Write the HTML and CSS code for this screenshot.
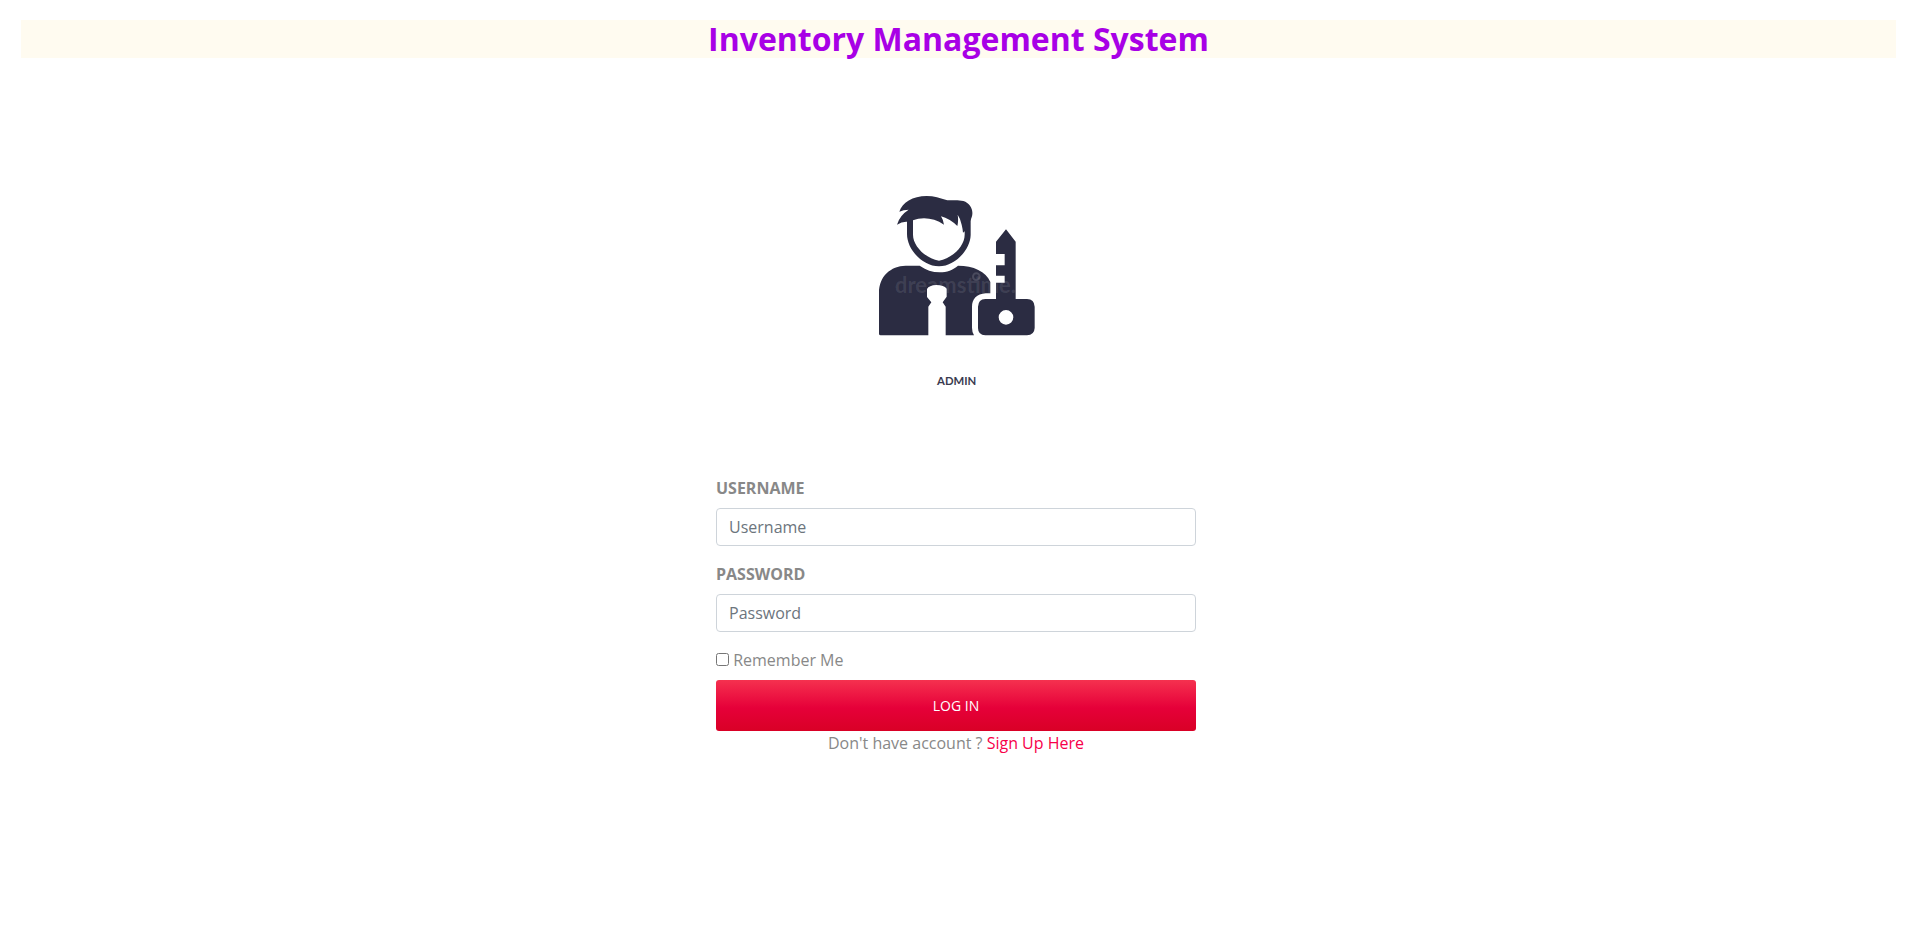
FILE: index.html
```html
<!DOCTYPE html>
<html lang="en">
<head>
<meta charset="utf-8">
<title>Inventory Management System</title>
<link rel="stylesheet" href="styles.css">
</head>
<body>
<header class="page-header">
  <h1 class="page-title">Inventory Management System</h1>
</header>
<main class="login">
  <svg class="login-picture" viewBox="3 0 570 660" role="img" aria-label="Admin">
    <g fill="#2b2c42">
      <path d="M118 95 C126 68 158 48 200 48 C222 48 240 54 262 61 C277 61 295 59 310 63 C332 70 342 92 335 112 Q332 118 332 124 V165 C331 209 285 259 237 259 C188 259 141 209 141 162 V125 Q126 124 111 134 Q119 106 146 89 Q130 89 118 95 Z"/>
      <path d="M57 461 V338 C57 289 92 258 137 257 H179 C197 270 217 277 239 277 C261 277 279 270 294 257 C340 257 378 274 391 306 V340 H377 C350 342 336 357 336 381 V443 Q336 456 342 466 H257 V380 L248 367 L260 350 V326 Q252 315 229 315 Q207 316 201 327 V351 L214 367 L205 380 V466 H62 Q57 466 57 461 Z"/>
      <path fill-rule="evenodd" d="M438 148 L467 185 V357 H501 Q523 358 524 380 V444 Q523 465 501 466 H376 Q354 465 354 444 V380 Q355 358 376 357 H408 V308 H434 V287 H408 V256 H434 V222 H408 V185 Z M438 390 A22 22 0 1 0 438 434 A22 22 0 1 0 438 390 Z"/>
    </g>
    <path fill="#fff" d="M159 121 C186 110 222 113 252 134 Q250 120 243 109 Q269 116 292 138 Q296 122 293 104 Q302 117 305 134 Q308 146 309 158 L314 154 V164 C314 198 277 235 237 242 C197 236 159 198 159 164 Z"/>
    <text class="watermark" x="105" y="339">dreamstime.</text>
    <circle class="watermark-mark" cx="349" cy="290" r="10"/>
    <text class="picture-caption" x="290" y="614">ADMIN</text>
  </svg>
  <form class="login-form">
    <div class="field">
      <label class="field-label" for="username">USERNAME</label>
      <input class="field-input" id="username" type="text" placeholder="Username">
    </div>
    <div class="field">
      <label class="field-label" for="password">PASSWORD</label>
      <input class="field-input" id="password" type="password" placeholder="Password">
    </div>
    <div class="remember">
      <input class="remember-box" id="remember" type="checkbox">
      <label for="remember">Remember Me</label>
    </div>
    <button class="login-button" type="submit">LOG IN</button>
    <p class="signup">Don't have account ? <a class="signup-link" href="#">Sign Up Here</a></p>
  </form>
</main>
</body>
</html>
```
FILE: styles.css
```css
* {
  box-sizing: border-box;
}

body {
  margin: 0;
  padding: 20px 19px 20px 21px;
  background: #fff;
  color: #888;
  font-family: "Open Sans", sans-serif;
  font-size: 16px;
  line-height: 24px;
}

.page-header {
  background: #fffbf0;
}

.page-title {
  margin: 0;
  color: #a800e6;
  font-size: 32px;
  font-weight: 700;
  line-height: 38px;
  text-align: center;
}

.login {
  display: flex;
  flex-direction: column;
  align-items: center;
  gap: 76px;
  padding: 122px 5px 0 0;
}

.login-picture {
  width: 190px;
  height: 220px;
}

.watermark {
  fill: #fff;
  fill-opacity: 0.1;
  font-family: Lato, sans-serif;
  font-size: 66px;
  font-weight: 700;
}

.watermark-mark {
  fill: none;
  stroke: #fff;
  stroke-opacity: 0.15;
  stroke-width: 6;
}

.picture-caption {
  fill: #3a3b4f;
  font-family: Lato, sans-serif;
  font-size: 34px;
  font-weight: 700;
  text-anchor: middle;
}

.login-form {
  display: flex;
  flex-direction: column;
  width: 100%;
  max-width: 480px;
}

.field {
  display: flex;
  flex-direction: column;
  gap: 8px;
  margin-bottom: 16px;
}

.field-label {
  font-weight: 700;
}

.field-input {
  width: 100%;
  height: 38px;
  padding: 6px 12px;
  border: 1px solid #ced4da;
  border-radius: 4px;
  background: #fff;
  color: #495057;
  font: inherit;
}

.field-input::placeholder {
  color: #6c757d;
  opacity: 1;
}

.remember {
  margin-bottom: 8px;
}

.remember-box {
  width: 13px;
  height: 13px;
  margin: 0;
}

.login-button {
  padding: 15px;
  border: 0;
  border-radius: 3px;
  background: linear-gradient(#f5314f, #e60039 55%, #d90026);
  color: #fff;
  font-family: inherit;
  font-size: 14px;
  line-height: 21px;
}

.signup {
  margin: 0;
  text-align: center;
}

.signup-link {
  color: #f7004a;
  text-decoration: none;
}
```
